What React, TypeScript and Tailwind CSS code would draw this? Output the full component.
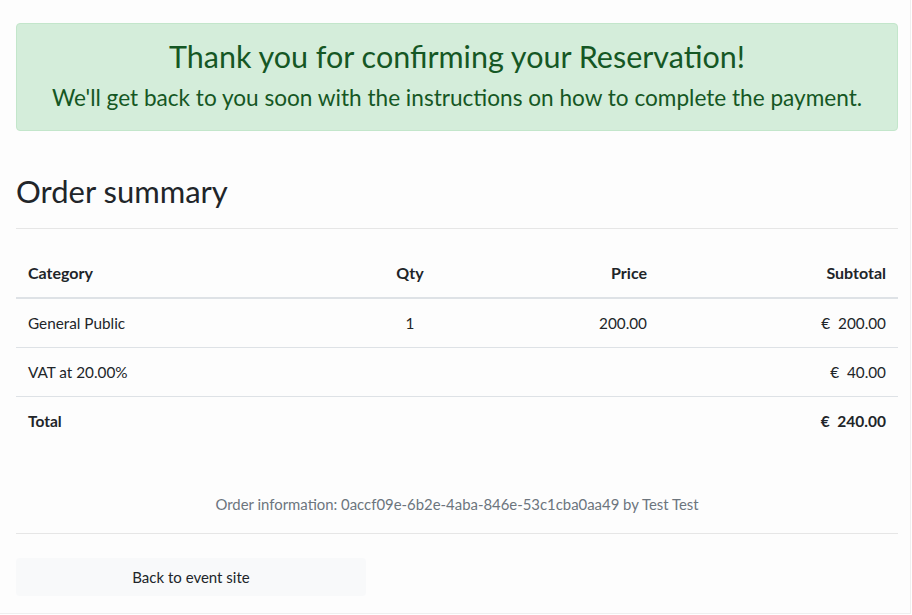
const rows = [
  { category: "General Public", qty: "1", price: "200.00", subtotal: "200.00" },
  { category: "VAT at 20.00%", qty: "", price: "", subtotal: "40.00" },
];

const cols = "grid grid-cols-[334px_120px_189px_239px]";

export default function App() {
  return (
    <div
      className="h-[614px] w-[911px] border-r border-b border-[#efefef] bg-[#fdfdfd] pt-[23px] pr-3 pl-4 text-[#212529]"
      style={{ fontFamily: "Lato, 'Open Sans', sans-serif" }}
    >
      <div className="rounded border border-[#c3e6cb] bg-[#d4edda] px-5 pt-[13px] pb-[17px] text-center text-[#155724]">
        <h3 className="mb-2 text-[30.5px] leading-[38px]">Thank you for confirming your Reservation!</h3>
        <p className="text-[22.6px] leading-[30px]">
          We'll get back to you soon with the instructions on how to complete the payment.
        </p>
      </div>

      <h2 className="mt-[41px] text-[31px] leading-[38px]">Order summary</h2>
      <hr className="mt-[18px] border-[#e6e6e6]" />

      <div className="mt-5 text-[15.3px] leading-6">
        <div className={`${cols} border-b-2 border-[#dee2e6] text-[16px] font-bold`}>
          <div className="p-3">Category</div>
          <div className="p-3 text-center">Qty</div>
          <div className="p-3 text-right">Price</div>
          <div className="p-3 text-right">Subtotal</div>
        </div>
        {rows.map((r) => (
          <div key={r.category} className={`${cols} border-b border-[#dee2e6]`}>
            <div className="p-3">{r.category}</div>
            <div className="p-3 text-center">{r.qty}</div>
            <div className="p-3 text-right">{r.price}</div>
            <div className="p-3 text-right">€&nbsp; {r.subtotal}</div>
          </div>
        ))}
        <div className={`${cols} text-[15.5px] font-bold`}>
          <div className="p-3">Total</div>
          <div className="p-3" />
          <div className="p-3" />
          <div className="p-3 text-right">€&nbsp; 240.00</div>
        </div>
      </div>

      <p className="mt-[47px] text-center text-[14.9px] leading-6 text-[#6c757d]">
        Order information: 0accf09e-6b2e-4aba-846e-53c1cba0aa49 by Test Test
      </p>
      <hr className="mt-[17px] border-[#e6e6e6]" />

      <button className="mt-6 h-[38px] w-[350px] rounded bg-[#f8f9fa] text-[15px] text-[#212529]">
        Back to event site
      </button>
    </div>
  );
}
